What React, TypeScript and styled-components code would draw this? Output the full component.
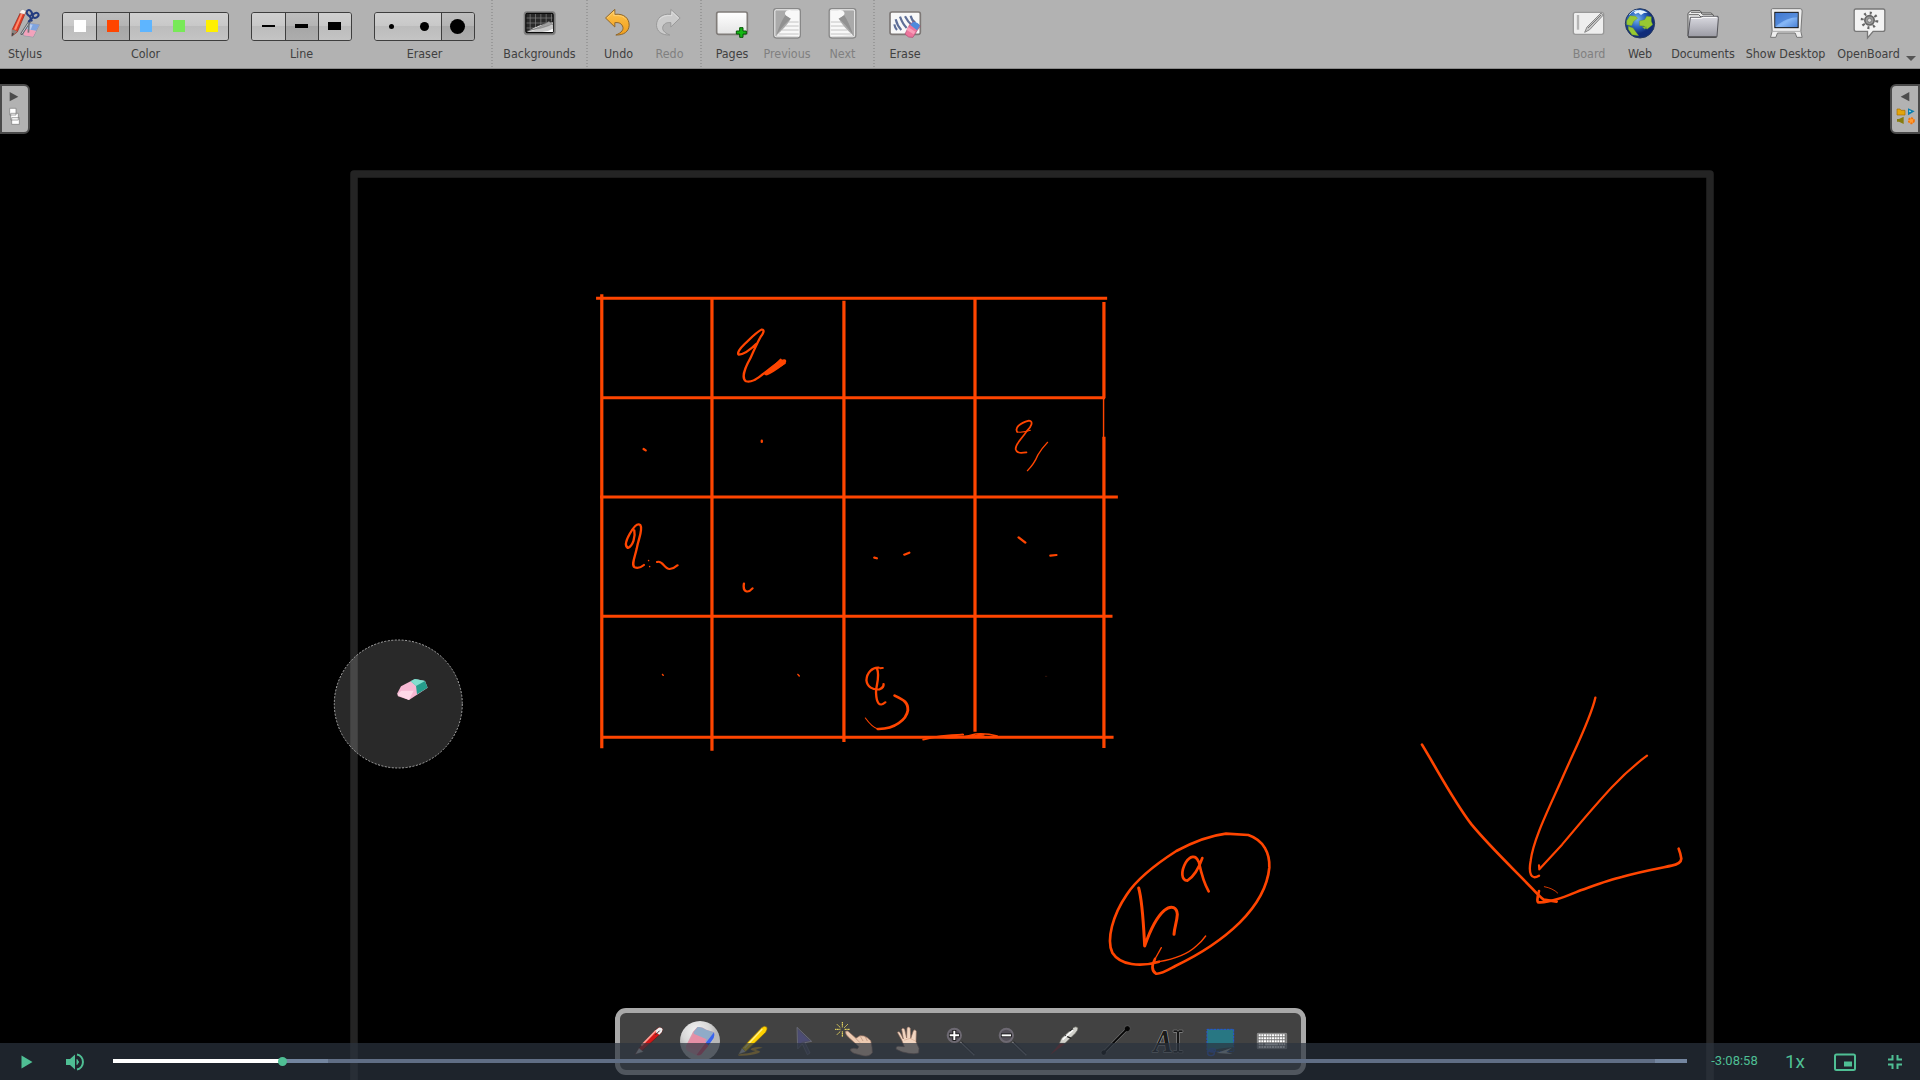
import React from "react";
import styled, { createGlobalStyle, css } from "styled-components";

const Global = createGlobalStyle`
  html, body { margin: 0; padding: 0; background: #000; overflow: hidden; }
  * { box-sizing: border-box; }
`;

const INK = "#ff4500";
const GREEN = "#4fbf94";

const Screen = styled.div`
  position: relative;
  width: 1920px;
  height: 1080px;
  display: flex;
  flex-direction: column;
  background: #000;
  overflow: hidden;
  font-family: "DejaVu Sans Condensed", "DejaVu Sans", "Noto Sans", sans-serif;
`;

/* ---------- top toolbar ---------- */

const Toolbar = styled.header`
  flex: none;
  height: 69px;
  display: flex;
  background: #b2b2b2;
  border-bottom: 1px solid #8a8a8a;
`;

const ToolCell = styled.div<{ $w: number; $ml?: number; $off?: boolean }>`
  flex: none;
  width: ${(p) => p.$w}px;
  margin-left: ${(p) => p.$ml ?? 0}px;
  display: flex;
  flex-direction: column;
  align-items: center;
  color: ${(p) => (p.$off ? "#808080" : "#404040")};
`;

const IconSlot = styled.div`
  height: 46px;
  padding-top: 3px;
  display: flex;
  justify-content: center;
`;

const Label = styled.span`
  height: 16px;
  line-height: 16px;
  font-family: "DejaVu Sans Condensed", "DejaVu Sans", sans-serif;
  font-stretch: condensed;
  font-size: 12.4px;
  white-space: nowrap;
`;

const Divider = styled.div<{ $ml?: number }>`
  flex: none;
  width: 2px;
  margin-left: ${(p) => p.$ml ?? 0}px;
  background: repeating-linear-gradient(#999 0 1px, #b2b2b2 1px 3px);
`;

const RightTools = styled.div`
  display: flex;
  margin-left: auto;
`;

const MenuArrow = styled.div`
  width: 13px;
  padding: 56px 0 0 0;
  &::after {
    content: "";
    display: block;
    width: 0;
    border: 5px solid transparent;
    border-top-color: #555;
    margin-left: -1px;
  }
`;

const Segmented = styled.div`
  height: 29px;
  margin: 12px 0 5px;
  width: 100%;
  display: flex;
  border: 1px solid #3e3e3e;
  border-radius: 3px;
  overflow: hidden;
`;

const Segment = styled.div<{ $on?: boolean; $rule?: boolean }>`
  flex: 1 1 0;
  display: flex;
  align-items: center;
  justify-content: center;
  background: linear-gradient(#d0d0d0, #c8c8c8 48%, #bcbcbc 50%, #c4c4c4);
  ${(p) => p.$on && css`background: linear-gradient(#bebebe, #b4b4b4 48%, #a6a6a6 50%, #adadad);`}
  ${(p) => p.$rule && css`box-shadow: inset 1px 0 #3e3e3e;`}
`;

const Mark = styled.i<{ $w: number; $h: number; $c?: string; $round?: boolean }>`
  width: ${(p) => p.$w}px;
  height: ${(p) => p.$h}px;
  margin-top: -1px;
  background: ${(p) => p.$c ?? "#000"};
  border-radius: ${(p) => (p.$round ? "50%" : "0")};
`;

/* ---------- board ---------- */

const Stage = styled.main`
  position: relative;
  flex: 1;
  display: flex;
  justify-content: space-between;
  align-items: flex-start;
  padding-top: 15px;
`;

const SideTab = styled.div<{ $right?: boolean }>`
  width: 30px;
  height: 50px;
  border: 2px solid #4a4a4a;
  border-radius: ${(p) => (p.$right ? "6px 0 0 6px" : "0 6px 6px 0")};
  background: #b2b2b2;
  display: flex;
  justify-content: center;
`;

const Ink = styled.svg`
  position: absolute;
  left: 0;
  top: 0;
  pointer-events: none;
`;

/* ---------- floating stylus palette ---------- */

const Palette = styled.div`
  position: absolute;
  left: 615px;
  top: 1008px;
  width: 691px;
  height: 67px;
  border: 5px solid #a9a9a9;
  border-radius: 11px;
  background: #424242;
  display: flex;
  justify-content: center;
  padding-top: 5px;
`;

const PaletteCell = styled.div`
  flex: none;
  width: 52px;
  height: 48px;
  display: flex;
  justify-content: center;
`;

/* ---------- video controls ---------- */

const Player = styled.footer`
  position: absolute;
  left: 0;
  right: 0;
  bottom: 0;
  height: 37px;
  display: flex;
  align-items: center;
  background: rgba(43, 51, 63, 0.7);
  color: ${GREEN};
  font-family: Roboto, "Liberation Sans", sans-serif;
`;

const Control = styled.div<{ $w: number; $size?: number }>`
  flex: none;
  width: ${(p) => p.$w}px;
  height: 37px;
  display: flex;
  align-items: center;
  justify-content: center;
  font-size: ${(p) => p.$size ?? 13}px;
`;

const TimeLeft = styled(Control)`
  padding-bottom: 2px;
`;

const Track = styled.div`
  flex: none;
  width: 1574px;
  height: 4px;
  margin: 0 12px 1px 13px;
  display: flex;
  align-items: center;
  background: #606e85;
`;

const Played = styled.div`
  width: 169px;
  height: 4px;
  background: #fff;
`;

const Knob = styled.div`
  width: 9px;
  height: 9px;
  margin: 0 -5px 0 -4px;
  border-radius: 50%;
  background: ${GREEN};
  z-index: 1;
`;

const Buffered = styled.div<{ $w: number; $end?: boolean }>`
  width: ${(p) => p.$w}px;
  height: 4px;
  background: #73859f;
  margin-left: ${(p) => (p.$end ? "auto" : "0")};
`;

/* ---------- icons ---------- */

type IconProps = { cx: number; children: React.ReactNode };

const BarIcon = ({ cx, children }: IconProps) => (
  <svg width="40" height="40" viewBox={`${cx - 60} 9 120 120`} fill="none">{children}</svg>
);

const PenIcon = ({ cx, children }: IconProps) => (
  <svg width="44" height="44" viewBox={`${cx - 66} 54 132 132`} fill="none">{children}</svg>
);

const StylusIcon = () => (
  <BarIcon cx={75}>
    <path d="M84 70l34 4-18 37-29-4z" fill="#c8b4c8" stroke="#8d8d9c" strokeWidth="2" />
    <path d="M84 70l34 4-10 18-33-6z" fill="#7ea4e0" />
    <path d="M84 72l14 2-6 15-17-4z" fill="#b8cdf0" />
    <path d="M75 86l33 7-9 17-28-4z" fill="#f2a2bb" />
    <path d="M92 60L65 101" stroke="#5e6369" strokeWidth="8" strokeLinecap="round" />
    <path d="M92 60L65 101" stroke="#c9ced2" strokeWidth="3" />
    <path d="M88 60l-3 38" stroke="#70757b" strokeWidth="5" />
    <ellipse cx="88" cy="39" rx="7" ry="9" transform="rotate(-35 88 39)" stroke="#263d80" strokeWidth="6" />
    <ellipse cx="107" cy="46" rx="7" ry="9" transform="rotate(60 107 46)" stroke="#263d80" strokeWidth="6" />
    <path d="M88 46l8 18M101 50L85 66" stroke="#263d80" strokeWidth="6" />
    <path d="M64 32l13 5-25 59-16 12 1-20z" fill="#e33a24" stroke="#8c2a20" strokeWidth="2" />
    <path d="M66 34l5 2-23 54-6-2z" fill="#ff8b6b" />
    <path d="M61 33q8-10 16 1l-3 9-16-4z" fill="#f7f3ef" stroke="#888" />
    <path d="M36 88l16 6-16 15z" fill="#89847f" />
    <path d="M36 98l7 3-8 9z" fill="#444" />
  </BarIcon>
);

const BackgroundsIcon = () => (
  <BarIcon cx={178.5}>
    <rect x="131" y="35" width="93" height="69" rx="7" fill="#777" stroke="#858585" strokeWidth="3" />
    <rect x="136" y="40" width="82" height="58" rx="4" fill="#292929" stroke="#000" strokeWidth="3" />
    <path d="M149 42v54M165 42v50M181 42v41M197 42v32M213 42v22M138 54h78M138 69h68M138 84h42" stroke="#868686" strokeWidth="2" />
    <path d="M217 67q-40 6-78 28l78 1z" fill="#f0f0f0" />
    <path d="M217 76q-36 5-68 20h68z" fill="#c5c5c5" />
    <path d="M205 64q-24 18-65 29 46-8 77-20z" fill="#a0a0a0" stroke="#444" />
    <path d="M185 96q18-1 32-10v10z" fill="#fff" />
  </BarIcon>
);

const arrowPath = "M375 54L403 28V43C431 40 446 55 446 76C445 94 431 106 406 105C424 98 431 88 426 78C421 68 412 67 403 68V81Z";

const UndoIcon = () => (
  <BarIcon cx={415.5}>
    <defs><linearGradient id="undo" x1="0" y1="0" x2="0" y2="1"><stop stopColor="#ffc44c" /><stop offset="1" stopColor="#f09e1c" /></linearGradient></defs>
    <path d={arrowPath} fill="url(#undo)" stroke="#8e672e" strokeWidth="3" strokeLinejoin="round" />
    <path d="M380 54L400 35V47Q427 44 437 59" stroke="#ffd98a" strokeWidth="2" />
  </BarIcon>
);

const RedoIcon = () => (
  <BarIcon cx={568.5}>
    <g transform="translate(974 0) scale(-1 1)">
      <path d={arrowPath} fill="#cbcbcb" stroke="#999" strokeWidth="3" strokeLinejoin="round" />
      <path d="M380 54L400 35V47Q427 44 437 59" stroke="#e6e6e6" strokeWidth="2" />
    </g>
  </BarIcon>
);

const PagesIcon = () => (
  <BarIcon cx={756}>
    <defs><linearGradient id="pg" x1="0" y1="0" x2="0" y2="1"><stop stopColor="#fff" /><stop offset="1" stopColor="#e4e4e4" /></linearGradient></defs>
    <rect x="710" y="36" width="92" height="67" rx="6" fill="url(#pg)" stroke="#807c79" strokeWidth="5" />
    <path d="M779 83h10v10h10v9h-10v10h-10v-10h-10v-9h10z" fill="#14b814" stroke="#075507" strokeWidth="3" />
  </BarIcon>
);

const PageTurn = () => (
  <>
    <rect x="881" y="26" width="80" height="88" rx="8" fill="#e6e6e6" stroke="#888" strokeWidth="4" />
    <rect x="885" y="30" width="72" height="80" rx="4" fill="#aaa" stroke="#f3f3f3" strokeWidth="2" />
    <path d="M889 107C906 91 925 72 931 57C925 51 911 46 916 36Q921 28 935 31H957V109Z" fill="#f8f8f8" />
    <path d="M916 46Q924 52 933 56Q915 68 889 105Q902 66 916 46Z" fill="#929292" />
    <path d="M925 66h31M916 78h40M906 90h50M896 102h60" stroke="#aaa" strokeWidth="2" />
  </>
);

const PreviousIcon = () => <BarIcon cx={921}><PageTurn /></BarIcon>;
const NextIcon = () => (
  <BarIcon cx={1087.5}><g transform="translate(2007 0) scale(-1 1)"><PageTurn /></g></BarIcon>
);

const EraseIcon = () => (
  <BarIcon cx={1275}>
    <rect x="1230" y="36" width="91" height="67" rx="6" fill="#f8f8f8" stroke="#7d7876" strokeWidth="5" />
    <path d="M1243 73q2 11 8 17M1247 58q5 20 17 32M1260 50q8 22 20 34M1275 49q9 18 22 28M1292 47q3 14 14 22" stroke="#5f6f98" strokeWidth="6.5" />
    <path d="M1289 74l11-9 21 13-9 13-13 21q-14 3-24-10z" fill="#ed759c" stroke="#a84b73" strokeWidth="2" />
    <path d="M1290 74l9-8q13-2 21 11l-9 14z" fill="#4f8adc" />
    <path d="M1284 81l22 14-5 8-21-13z" fill="#fa9db9" />
  </BarIcon>
);

const BoardIcon = () => (
  <BarIcon cx={148}>
    <rect x="101" y="37" width="91" height="66" rx="6" fill="#eee" stroke="#999" strokeWidth="4" />
    <path d="M115 45v44" stroke="#b5b5b5" strokeWidth="7" />
    <path d="M135 97l7-16 42-42 7 6-41 44z" fill="#c6c6c6" stroke="#888" strokeWidth="3" />
    <path d="M145 84l39-39" stroke="#777" strokeWidth="3" />
  </BarIcon>
);

const WebIcon = () => (
  <BarIcon cx={300}>
    <defs><radialGradient id="globe" cx=".4" cy=".35"><stop stopColor="#78b4ed" /><stop offset=".55" stopColor="#2d67c2" /><stop offset="1" stopColor="#102c79" /></radialGradient></defs>
    <circle cx="300" cy="70" r="44" fill="url(#globe)" stroke="#263a60" strokeWidth="3" />
    <path d="M260 62l10-15 17 2 6 6-12 9-6 13-15-3zM265 79l14 5 17 23-20-3-11-16zM298 63l16-4 6-10 14 1v14l4 10-17 14-9-10-13-1zM306 80l14 1-5 7z" fill="#97c832" stroke="#668f20" />
    <path d="M281 37q18-15 42 1l-11 1-9 6-8-7-9 4z" fill="#e6f2fc" />
    <path d="M268 44q14-17 28-12" stroke="#b9dbfa" strokeWidth="3" />
  </BarIcon>
);

const DocumentsIcon = () => (
  <BarIcon cx={489}>
    <defs><linearGradient id="fold" x1="0" y1="0" x2="0" y2="1"><stop stopColor="#dadae1" /><stop offset="1" stopColor="#9999a2" /></linearGradient></defs>
    <path d="M444 108V40l9-8h27l6 7h28l8 10v54z" fill="#ededed" stroke="#555" strokeWidth="3" />
    <path d="M447 44h29l7 7h31M453 37h28l7 7h32" stroke="#666" strokeWidth="3" />
    <path d="M444 109l7-57h31l8-3h44l1 6-4 54q-1 3-5 3h-78z" fill="url(#fold)" stroke="#55555b" strokeWidth="3" />
    <path d="M453 55h29l9-3h39" stroke="#fff" strokeWidth="3" />
    <path d="M444 111h86" stroke="#444" strokeWidth="4" />
  </BarIcon>
);

const DesktopIcon = () => (
  <BarIcon cx={736.5}>
    <defs><linearGradient id="screen" x1="0" y1="0" x2="1" y2="1"><stop stopColor="#5084dc" /><stop offset=".55" stopColor="#86b7f5" /><stop offset="1" stopColor="#467ed4" /></linearGradient></defs>
    <path d="M696 26h83q6 0 6 7l-4 61 4 18h-16l-5-13h-53l-5 13h-16l5-18-3-61q0-7 4-7z" fill="#eee" stroke="#777" strokeWidth="3" />
    <path d="M696 94h84" stroke="#aaa" strokeWidth="3" />
    <rect x="703" y="37" width="70" height="46" fill="url(#screen)" stroke="#101010" strokeWidth="3" />
    <path d="M705 80q30-27 66-28V39h-66z" fill="#366fca" opacity=".6" />
  </BarIcon>
);

const OpenBoardIcon = () => (
  <BarIcon cx={985.5}>
    <path d="M946 27h82q5 0 5 6v56q0 5-6 5h-29l-17 20V94h-35q-5 0-5-6V33q0-6 5-6z" fill="#f3f3f3" stroke="#777" strokeWidth="4" />
    <circle cx="987" cy="61" r="22" stroke="#666" strokeWidth="9" strokeDasharray="6 11.28" />
    <circle cx="987" cy="61" r="14" fill="#999" stroke="#666" strokeWidth="5" />
    <circle cx="987" cy="61" r="6" fill="#ddd" stroke="#666" strokeWidth="2" />
  </BarIcon>
);

const PALETTE_ICONS: React.ReactNode[] = [
  <PenIcon cx={147}>
    <path d="M106 163l11-19 55-59q9-6 16 2-1 10-8 16l-57 52z" fill="#d51818" stroke="#5f1d1a" strokeWidth="2" />
    <path d="M163 94l13-11q9-2 12 5 0 9-10 16z" fill="#eee" />
    <path d="M124 137l44-45" stroke="#ff9f95" strokeWidth="5" />
    <path d="M166 105l13-13" stroke="#333" strokeWidth="3" />
    <path d="M106 163l11-19 13 11z" fill="#c0c0c0" stroke="#555" />
  </PenIcon>,
  <PenIcon cx={303}>
    <defs><radialGradient id="ball" cx=".4" cy=".25"><stop stopColor="#f3f3f3" /><stop offset=".7" stopColor="#d7d7d7" /><stop offset="1" stopColor="#b8b8b8" /></radialGradient></defs>
    <circle cx="300" cy="123" r="60" fill="url(#ball)" />
    <path d="M258 137l21-42 13-14q15-2 27 8l24 8-1 15-37 51q-7 8-17 2l-25-12q-7-6-5-16z" fill="#dd9aac" />
    <path d="M281 96l12-15q12-2 25 8l24 8-22 29-38-15z" fill="#8fabc8" />
    <path d="M342 97q3 9-1 17l-16 23-8-8z" fill="#3765ef" />
    <path d="M258 139l36 12 26-33-39-17z" fill="#e58fa6" />
    <path d="M317 128l8 10-21 25q-7 5-14 1z" fill="#e75175" />
  </PenIcon>,
  <PenIcon cx={459}>
    <path d="M414 163q33-2 53-10-24-3-10-9 18-6 31-1-15 3-22 7 24 4 8 10-22 8-58 7z" fill="#dca622" />
    <path d="M416 163l10-19 60-62q8-7 15 0 2 7-4 15l-61 59z" fill="#ffd200" stroke="#71591c" strokeWidth="2" />
    <path d="M434 144l53-57" stroke="#fff08a" strokeWidth="4" />
    <path d="M416 163l10-19 11 11z" fill="#c9c9c9" stroke="#444" />
  </PenIcon>,
  <PenIcon cx={615}>
    <path d="M591 82l44 42-20 4 15 31-8 5-15-32-14 15z" fill="#4a4b60" stroke="#777987" strokeWidth="2" />
    <path d="M594 89l34 33-21 3-12 12z" fill="#4c4c73" />
  </PenIcon>,
  <PenIcon cx={771}>
    <path d="M737 94q6-4 12 4l19 17 12-8 12 1 10 5 10 9 4 20 1 16q-10 13-27 9l-28-7q-14-7-10-13 9-5 20 0l5-7-32-29q-10-9-8-17z" fill="#edcbb2" stroke="#a27967" strokeWidth="2" />
    <path d="M768 116l12 12M781 109l8 14M796 111l6 12" stroke="#b68b76" strokeWidth="2" />
    <path d="M727 66v16M727 94v17M705 88h16M734 88h16M711 73l10 10M743 73l-10 10M711 104l10-10" stroke="#ffeb62" strokeWidth="3" strokeDasharray="4 1" />
  </PenIcon>,
  <PenIcon cx={927}>
    <path d="M892 97q5-5 9 2l9 18-5-29q3-7 9 0l6 26 1-30q5-6 10 1l1 31 8-24q6-6 9 2l-1 31 9 20-1 14q-12 4-30 1-22-3-37-12-3-9 7-9l17 1-8-20z" fill="#f2d5c0" stroke="#8c6b5c" strokeWidth="2" />
    <path d="M912 121l18-6 18 9" stroke="#d9ad92" strokeWidth="2" />
  </PenIcon>,
  ...[0, 1].map((k) => (
    <PenIcon cx={33 + k * 156}>
      <circle cx={13 + k * 156} cy="106" r="20" fill="#555159" stroke="#6d6972" strokeWidth="6" />
      <path d={`M${33 + k * 156} 127l38 36`} stroke="#27272a" strokeWidth="8" />
      <path d={`M${31 + k * 156} 126l42 40`} stroke="#7c7c7f" strokeWidth="4" />
      <path d={k ? "M153 106h32" : "M-3 106h32M13 90v32"} stroke="#111" strokeWidth="11" />
      <path d={k ? "M155 106h28" : "M-1 106h28M13 92v28"} stroke="#fff" strokeWidth="6" />
    </PenIcon>
  )),
  <PenIcon cx={345}>
    <path d="M300 165l34-40 10 7z" fill="#a72525" opacity=".85" />
    <path d="M328 130l7-16 35-31q7-5 14 0 1 7-7 16l-32 31z" fill="#d2d2cc" stroke="#5e5e58" strokeWidth="2" />
    <path d="M345 107l19 8M359 94l10-8" stroke="#222" strokeWidth="4" />
    <path d="M338 119l31-29" stroke="#fff" strokeWidth="4" />
  </PenIcon>,
  <PenIcon cx={501}>
    <path d="M461 158l71-72" stroke="#777" strokeWidth="9" />
    <circle cx="461" cy="158" r="8" fill="#050505" stroke="#666" strokeWidth="2" />
    <circle cx="532" cy="86" r="9" fill="#050505" stroke="#666" strokeWidth="2" />
    <path d="M461 158l71-72" stroke="#050505" strokeWidth="6" />
  </PenIcon>,
  <PenIcon cx={657}>
    <text x="611" y="155" fontFamily="Liberation Serif, serif" fontWeight="bold" fontStyle="italic" fontSize="92" textLength="57" lengthAdjust="spacingAndGlyphs" fill="#1a1a1a" stroke="#b0b0b0" strokeWidth="3" paintOrder="stroke">A</text>
    <path d="M670 91h11l3 4 3-4h11v5h-10v57h10v5h-11l-3-4-3 4h-11v-5h10V96h-10z" fill="#151515" stroke="#b0b0b0" strokeWidth="3" paintOrder="stroke" />
  </PenIcon>,
  <PenIcon cx={813}>
    <rect x="771" y="88" width="80" height="66" fill="#287783" stroke="#2457d6" strokeWidth="3" strokeDasharray="7 3" />
    <path d="M790 154h61v-12q-26 0-61 8z" fill="#33464e" />
    <path d="M800 159l46-16-17 13 19 6z" fill="#a8b5b8" />
    <ellipse cx="783" cy="159" rx="10" ry="8" stroke="#315ac4" strokeWidth="4" />
    <ellipse cx="787" cy="151" rx="9" ry="5" stroke="#315ac4" strokeWidth="4" />
  </PenIcon>,
  <PenIcon cx={969}>
    <rect x="922" y="100" width="88" height="46" rx="2" fill="#777" stroke="#a7a7a7" strokeWidth="2" />
    <path d="M926 106h80M926 115h80M926 124h80M926 133h16M986 133h20M926 141h80" stroke="#fff" strokeWidth="6" strokeDasharray="6 2" />
    <path d="M944 133h40" stroke="#fff" strokeWidth="6" />
  </PenIcon>,
];

const Handwriting = () => (
  <Ink width="1920" height="1080" viewBox="0 0 1920 1080" fill="none">
    <path d="M354 1080V174H1710V1080" stroke="#242424" strokeWidth="7.5" strokeLinejoin="round" />

    <g transform="translate(580 280) scale(.357143 .333333)" stroke={INK} strokeWidth="9">
      <path d="M45 54.5H1476M61 353.5H1470M56 651H1506" />
      <path d="M61 43V1405M369.500 54V1412M739 62V1386M1106 54V1355M1467 66V355M1467 470V1404" />
      <path d="M1466 355V480" strokeWidth="4" />
      <g strokeWidth="6.500" strokeLinecap="round" strokeLinejoin="round">
        <path d="M493 192C477 209 462 222 445 224C438 221 448 205 461 192C476 177 491 159 508 149C518 148 514 160 506 170C495 190 487 212 477 235C462 263 451 295 465 304C482 309 497 294 514 281C531 268 547 251 564 243C579 237 576 247 566 254C550 267 536 277 523 283C535 266 548 262 569 244" />
        <path d="M519 282L571 246M525 280L573 249M533 269L562 239" />
        <path d="M1224 456C1217 442 1231 430 1257 422C1271 424 1263 441 1252 452C1237 477 1218 492 1220 508C1223 521 1237 519 1250 517" strokeWidth="5" />
        <path d="M1224 456Q1242 458 1261 451" strokeWidth="3" />
        <path d="M1309 487Q1292 506 1282 525Q1272 551 1253 572" strokeWidth="4" />
        <path d="M178 507l6 4M509 482v4" />
      </g>
    </g>

    <g transform="translate(580 500) scale(.357143 .333333)" stroke={INK} strokeWidth="9">
      <path d="M61 348.500H1491M61 711.500H1494" />
      <g strokeWidth="6.500" strokeLinecap="round" strokeLinejoin="round">
        <path d="M152 91C156 111 148 137 134 144C124 138 130 119 139 102C149 83 160 67 169 75C177 89 164 114 159 145C153 174 143 196 153 202C163 206 171 202 179 195" />
        <path d="M192 181v1M195 199v1" strokeWidth="4" />
        <path d="M216 186C232 180 235 207 251 207Q263 206 273 196M459 251C455 278 471 280 483 265M824 173l7 2M908 164l14-6M1228 112l19 16M1317 167l17-2" />
        <path d="M231 523l2 3M610 523l4 5" strokeWidth="4" />
        <path d="M1303 529h4" stroke="#4a1b0e" strokeWidth="2" />
        <path d="M836 503C818 502 803 518 802 541C804 560 820 571 839 568Q851 562 850 552M832 507C841 530 827 562 829 580C830 608 838 623 855 607" />
        <path d="M839 504l9-1M849 504l-8 2" strokeWidth="4" />
        <path d="M881 587C908 600 919 608 918 631C914 657 883 688 834 687" strokeWidth="8" />
        <path d="M834 687Q817 681 799 654" strokeWidth="3" />
        <path d="M961 719Q1006 706 1073 704Q1029 707 1021 712Q1057 717 1107 702Q1138 699 1168 708M1026 713Q1080 712 1130 705" strokeWidth="5" />
      </g>
    </g>

    <g transform="translate(1080 800) scale(.333333)" stroke={INK} strokeWidth="8" strokeLinecap="round" strokeLinejoin="round">
      <path d="M237 485C181 502 121 496 97 458C78 419 99 344 140 284C174 232 236 187 289 153C340 126 388 107 438 101L505 105C552 121 570 161 568 203C562 265 529 318 479 368C426 420 351 467 286 498C262 511 243 523 228 521C214 512 216 494 225 477" />
      <path d="M225 477L244 443M237 485Q313 472 349 438Q365 425 377 408" strokeWidth="4" />
      <path d="M176 264C188 306 191 383 194 438C211 389 230 351 253 331C276 313 291 324 292 343C291 365 283 382 282 403" strokeWidth="9" />
      <path d="M355 184C347 164 330 167 317 188C302 215 304 241 322 242C338 232 354 212 367 174M357 188Q369 244 386 274" />
    </g>

    <g transform="translate(1400 680) scale(.333333)" stroke={INK} strokeWidth="8" strokeLinecap="round" strokeLinejoin="round">
      <path d="M66 194C116 276 159 360 215 434C276 507 342 568 397 626Q418 649 431 659L470 665" />
      <path d="M417 633Q408 667 416 667C453 669 502 647 542 631C590 614 629 599 665 591C720 575 776 565 815 557Q843 552 844 536Q841 518 836 506" />
      <path d="M586 53C573 113 530 196 487 294C447 385 400 477 392 542C385 580 393 602 417 587" strokeWidth="7" />
      <path d="M741 227C703 255 667 288 634 323C577 385 530 441 486 494L418 568L417 556" strokeWidth="6.500" />
      <path d="M433 620Q459 625 473 639" strokeWidth="2.500" />
    </g>

    <circle cx="398.300" cy="704" r="64" fill="#fff" fillOpacity=".16" stroke="#aaa" strokeDasharray="2 1.500" />
    <g transform="translate(320 620) scale(.333333)">
      <path d="M232 220L243 199L285 177L315 183L323 203L267 240L234 229Z" fill="#f7b8d3" />
      <path d="M272 184L285 177L315 183L323 203L291 223L288 197Z" fill="#259d8c" />
      <path d="M272 184L285 177L315 183L288 198Z" fill="#83decf" />
      <path d="M232 225L244 212L281 212L267 240Z" fill="#ffd8e8" />
    </g>
  </Ink>
);

const Tool = (p: { w: number; ml?: number; off?: boolean; label: string; children: React.ReactNode }) => (
  <ToolCell $w={p.w} $ml={p.ml} $off={p.off}>
    <IconSlot>{p.children}</IconSlot>
    <Label>{p.label}</Label>
  </ToolCell>
);

export default function App() {
  return (
    <Screen>
      <Global />
      <Toolbar>
        <Tool w={50} label="Stylus"><StylusIcon /></Tool>
        <ToolCell $w={167} $ml={12}>
          <Segmented>
            {["#ffffff", "#ff4500", "#5eb5ff", "#78e957", "#fff000"].map((c, i) => (
              <Segment key={c} $on={i === 1} $rule={i === 1 || i === 2}><Mark $w={12} $h={12} $c={c} /></Segment>
            ))}
          </Segmented>
          <Label>Color</Label>
        </ToolCell>
        <ToolCell $w={101} $ml={22}>
          <Segmented>
            {[2, 4, 8].map((h, i) => (
              <Segment key={h} $on={i === 1} $rule={i > 0}><Mark $w={13} $h={h} /></Segment>
            ))}
          </Segmented>
          <Label>Line</Label>
        </ToolCell>
        <ToolCell $w={101} $ml={22}>
          <Segmented>
            {[5, 9, 15].map((d, i) => (
              <Segment key={d} $on={i === 2} $rule={i === 2}><Mark $w={d} $h={d} $round /></Segment>
            ))}
          </Segmented>
          <Label>Eraser</Label>
        </ToolCell>
        <Divider $ml={16} />
        <Tool w={93} label="Backgrounds"><BackgroundsIcon /></Tool>
        <Divider />
        <Tool w={61} label="Undo"><UndoIcon /></Tool>
        <Tool w={41} label="Redo" off><RedoIcon /></Tool>
        <Divider $ml={10} />
        <Tool w={60} label="Pages"><PagesIcon /></Tool>
        <Tool w={50} label="Previous" off><PreviousIcon /></Tool>
        <Tool w={61} label="Next" off><NextIcon /></Tool>
        <Divider />
        <Tool w={60} label="Erase"><EraseIcon /></Tool>
        <RightTools>
          <Tool w={52} label="Board" off><BoardIcon /></Tool>
          <Tool w={50} label="Web"><WebIcon /></Tool>
          <Tool w={76} label="Documents"><DocumentsIcon /></Tool>
          <Tool w={89} label="Show Desktop"><DesktopIcon /></Tool>
          <Tool w={77} label="OpenBoard"><OpenBoardIcon /></Tool>
          <MenuArrow />
        </RightTools>
      </Toolbar>

      <Stage>
        <SideTab>
          <svg width="26" height="46" viewBox="6 258 78 138">
            <path d="M29 276l26 14-26 14z" fill="#4c4c4c" />
            <path d="M29 325h19v20H29zM32 340h23v20H32zM35 353h23v20H35z" fill="#fff" stroke="#777" strokeWidth="2" />
          </svg>
        </SideTab>
        <SideTab $right>
          <svg width="26" height="46" viewBox="1056 258 78 138">
            <path d="M1108 276l-26 14 26 14z" fill="#4c4c4c" />
            <path d="M1071 327h9l3 4h12v14h-24z" fill="#e3a50b" stroke="#a66c00" strokeWidth="2" />
            <path d="M1104 325l20 9-20 12z" fill="#087cae" />
            <path d="M1108 331l6 3-6 3z" fill="#d6eefa" />
            <path d="M1071 357h6l14-7v22l-14-7h-6z" fill="#877b0d" />
            <circle cx="1114" cy="362" r="8" fill="#ff9b32" stroke="#f17208" strokeWidth="5" strokeDasharray="6 3" />
          </svg>
        </SideTab>
      </Stage>

      <Handwriting />

      <Palette>
        {PALETTE_ICONS.map((icon, i) => <PaletteCell key={i}>{icon}</PaletteCell>)}
      </Palette>

      <Player>
        <Control $w={50}>
          <svg width="16" height="16" viewBox="-1.500 0 16 16" overflow="visible"><path d="M3 1.500v13l11-6.500z" fill={GREEN} /></svg>
        </Control>
        <Control $w={50}>
          <svg width="20" height="20" viewBox="0 0 20 20" fill="none">
            <path d="M1 7h4l5-4.500v15L5 13H1z" fill={GREEN} />
            <path d="M12 7.500q3 2.500 0 5z" fill={GREEN} stroke={GREEN} />
            <path d="M12 2.500a7.700 7.700 0 0 1 0 15" stroke={GREEN} strokeWidth="2" />
          </svg>
        </Control>
        <Track>
          <Played />
          <Knob />
          <Buffered $w={46} />
          <Buffered $w={32} $end />
        </Track>
        <TimeLeft $w={71}>-3:08:58</TimeLeft>
        <Control $w={50} $size={19}>1x</Control>
        <Control $w={50}>
          <svg width="22" height="18" viewBox="0 0 22 18" fill="none">
            <rect x="1" y="1.500" width="20" height="15.500" rx="1.500" stroke={GREEN} strokeWidth="2" />
            <path d="M10 8.500h8v5h-8z" fill={GREEN} />
          </svg>
        </Control>
        <Control $w={50}>
          <svg width="16" height="16" viewBox="0 0 16 16" fill="none">
            <path d="M1 5.500h4.500V1M15 5.500h-4.500V1M1 10.500h4.500V15M15 10.500h-4.500V15" stroke={GREEN} strokeWidth="2" />
          </svg>
        </Control>
      </Player>
    </Screen>
  );
}
